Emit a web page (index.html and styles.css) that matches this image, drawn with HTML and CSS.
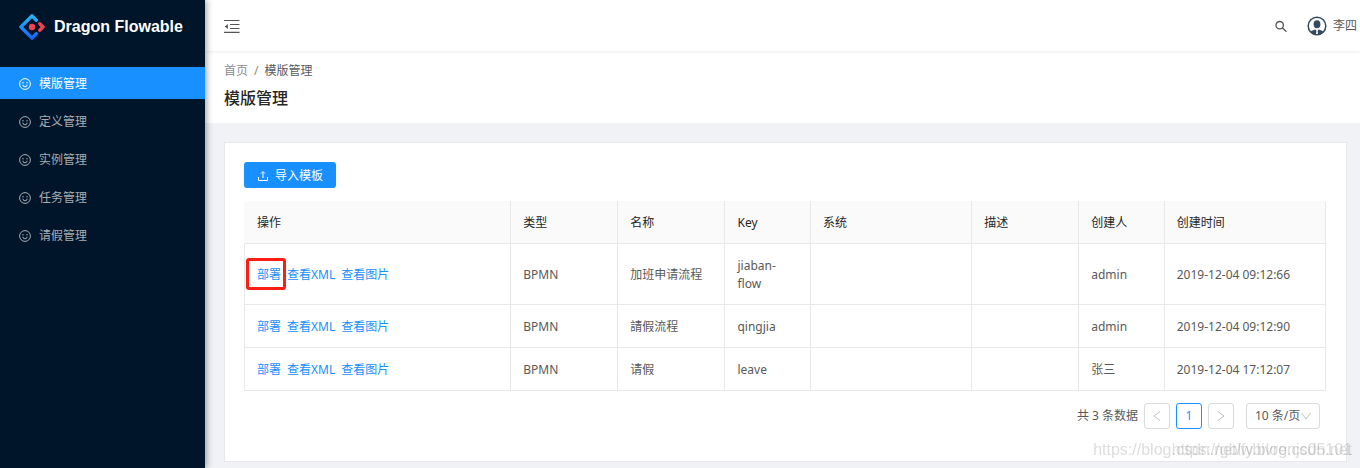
FILE: index.html
```html
<!DOCTYPE html>
<html lang="zh-CN">
<head>
    <meta charset="utf-8">
    <title>Dragon Flowable</title>
    <meta name="viewport" content="width=device-width, initial-scale=1">
    <link rel="stylesheet" href="styles.css">
</head>
<body>
    <svg class="sprite" aria-hidden="true">
        <symbol id="smile" viewBox="0 0 12 12">
            <circle cx="6" cy="6" r="5.4" fill="none" stroke="currentColor"/>
            <circle cx="4" cy="4.8" r=".7" fill="currentColor"/>
            <circle cx="8" cy="4.8" r=".7" fill="currentColor"/>
            <path d="M3.9 6.7a2.1 2.1 0 0 0 4.2 0" fill="none" stroke="currentColor"/>
        </symbol>
    </svg>
    <aside class="sider">
        <a class="logo" href="#">
            <svg width="26" height="26" viewBox="0 0 26 26" fill="none" stroke-width="3.4" stroke-linecap="round" stroke-linejoin="round">
                <defs>
                    <linearGradient id="blue" x1="0" y1="0" x2="0" y2="1">
                        <stop offset="0" stop-color="#29b4ee"/>
                        <stop offset="1" stop-color="#1268ff"/>
                    </linearGradient>
                </defs>
                <path d="M17.3 6.2 13 1.900 1.900 13 13 24.100l4.3-4.3" stroke="url(#blue)"/>
                <path d="M20.800 9.800 24 13l-3.200 3.200" stroke="#f5404f"/>
                <circle cx="13" cy="13" r="3.2" fill="#f5404f"/>
            </svg>
            <h1>Dragon Flowable</h1>
        </a>
        <nav class="menu">
            <a class="menu-item active" href="#"><svg><use href="#smile"/></svg>模版管理</a>
            <a class="menu-item" href="#"><svg><use href="#smile"/></svg>定义管理</a>
            <a class="menu-item" href="#"><svg><use href="#smile"/></svg>实例管理</a>
            <a class="menu-item" href="#"><svg><use href="#smile"/></svg>任务管理</a>
            <a class="menu-item" href="#"><svg><use href="#smile"/></svg>请假管理</a>
        </nav>
    </aside>
    <div class="main">
        <header class="header">
            <button class="icon-btn" type="button" aria-label="折叠菜单">
                <svg width="16" height="14" viewBox="0 0 16 14" fill="none" stroke="#555" stroke-width="1.2">
                    <path d="M0 1.5h15.5M6 5.5h9.5M6 9.500h9.5M0 13.400h15.5"/>
                    <path d="M3.800 4.900v5L.8 7.400z" fill="#555" stroke="none"/>
                </svg>
            </button>
            <div class="header-right">
                <button class="icon-btn" type="button" aria-label="搜索">
                    <svg width="12" height="12" viewBox="0 0 12 12" fill="none" stroke="#555" stroke-width="1.3">
                        <circle cx="4.7" cy="5.2" r="3.7"/>
                        <path d="M7.4 8 11.5 11.7"/>
                    </svg>
                </button>
                <a class="user" href="#">
                    <svg width="20" height="20" viewBox="0 0 20 20">
                        <circle cx="10" cy="10" r="8.8" fill="none" stroke="#34495e" stroke-width="1.5"/>
                        <ellipse cx="10" cy="8.200" rx="3.4" ry="4" fill="#34495e"/>
                        <path d="M3.8 15.6c1.5-1.8 3.300-1.600 4.600-2.200l1 1.500-.6 4c-2-.3-3.700-1.500-5-3.300zM16.200 15.600c-1.500-1.800-3.300-1.600-4.600-2.200l-1 1.500.6 4c2-.3 3.700-1.500 5-3.300z" fill="#34495e"/>
                    </svg>
                    李四
                </a>
            </div>
        </header>
        <div class="page-header">
            <nav class="breadcrumb"><a href="#">首页</a><i>/</i><span>模版管理</span></nav>
            <h2>模版管理</h2>
        </div>
        <main class="card">
            <button class="btn-primary" type="button">
                <svg width="12" height="12" viewBox="0 0 12 12" fill="none" stroke="currentColor">
                    <path d="M1.5 7v3.500h9V7M6 8V2M4 3.500 6 1.500l2 2"/>
                </svg>
                导入模板
            </button>
            <table class="table">
                <colgroup>
                    <col class="col-action"><col class="col-m"><col class="col-m"><col class="col-s">
                    <col class="col-l"><col class="col-m"><col class="col-s"><col>
                </colgroup>
                <thead>
                    <tr>
                        <th>操作</th><th>类型</th><th>名称</th><th>Key</th>
                        <th>系统</th><th>描述</th><th>创建人</th><th>创建时间</th>
                    </tr>
                </thead>
                <tbody>
                    <tr>
                        <td><div class="actions"><a class="marked" href="#">部署</a><a href="#">查看XML</a><a href="#">查看图片</a></div></td>
                        <td>BPMN</td><td>加班申请流程</td><td>jiaban-flow</td>
                        <td></td><td></td><td>admin</td><td>2019-12-04 09:12:66</td>
                    </tr>
                    <tr>
                        <td><div class="actions"><a href="#">部署</a><a href="#">查看XML</a><a href="#">查看图片</a></div></td>
                        <td>BPMN</td><td>請假流程</td><td>qingjia</td>
                        <td></td><td></td><td>admin</td><td>2019-12-04 09:12:90</td>
                    </tr>
                    <tr>
                        <td><div class="actions"><a href="#">部署</a><a href="#">查看XML</a><a href="#">查看图片</a></div></td>
                        <td>BPMN</td><td>请假</td><td>leave</td>
                        <td></td><td></td><td>张三</td><td>2019-12-04 17:12:07</td>
                    </tr>
                </tbody>
            </table>
            <div class="pagination">
                <span>共 3 条数据</span>
                <button class="page-btn" type="button" aria-label="上一页" disabled>
                    <svg width="10" height="12" viewBox="0 0 10 12" fill="none" stroke="currentColor"><path d="M8 1.5 2 6l6 4.5"/></svg>
                </button>
                <button class="page-btn current" type="button">1</button>
                <button class="page-btn" type="button" aria-label="下一页" disabled>
                    <svg width="10" height="12" viewBox="0 0 10 12" fill="none" stroke="currentColor"><path d="M2 1.5 8 6l-6 4.5"/></svg>
                </button>
                <div class="page-size">
                    <select aria-label="每页条数"><option>10 条/页</option></select>
                    <svg width="10" height="8" viewBox="0 0 10 8" fill="none" stroke="currentColor"><path d="M.5 1 5 7l4.5-6"/></svg>
                </div>
            </div>
        </main>
    </div>
    <div class="watermark">https://blog.csdn.net/wbivrenjc05101</div>
    <div class="watermark">https://gblfy.blog.csdn.net</div>
</body>
</html>
```
FILE: styles.css
```css
* {
    box-sizing: border-box;
}
body {
    margin: 0;
    min-height: 100vh;
    display: flex;
    background: #f0f2f5;
    color: #595959;
    font: 12px/18px "Noto Sans", "Noto Sans CJK SC", sans-serif;
}
a {
    color: #1890ff;
    text-decoration: none;
}
button,
select {
    font: inherit;
    cursor: pointer;
}
h1,
h2 {
    margin: 0;
}
.sprite {
    position: absolute;
    width: 0;
    height: 0;
}

/* sider */
.sider {
    flex: 0 0 205px;
    background: #001529;
    box-shadow: 2px 0 6px rgba(0, 21, 41, .35);
    z-index: 1;
}
.logo {
    display: flex;
    align-items: center;
    gap: 9px;
    height: 54px;
    padding-left: 19px;
}
.logo h1 {
    color: #fff;
    font: bold 16px/24px "Liberation Sans", Arial, sans-serif;
}
.menu {
    display: flex;
    flex-direction: column;
    gap: 6px;
    padding-top: 13px;
}
.menu-item {
    display: flex;
    align-items: center;
    gap: 8px;
    height: 32px;
    padding: 2px 0 0 19px;
    color: #a6adb4;
}
.menu-item svg {
    width: 12px;
    height: 12px;
}
.menu-item.active {
    background: #1890ff;
    color: #fff;
}

/* header */
.main {
    flex: 1;
    min-width: 0;
}
.header {
    display: flex;
    align-items: center;
    justify-content: space-between;
    height: 51px;
    padding: 0 3px 0 19px;
    background: #fff;
    box-shadow: 0 1px 3px rgba(0, 21, 41, .08);
    position: relative;
}
.icon-btn {
    display: flex;
    padding: 0;
    border: 0;
    background: none;
}
.header-right {
    display: flex;
    align-items: center;
    gap: 20px;
}
.user {
    display: flex;
    align-items: center;
    gap: 6px;
    color: #595959;
}
.page-header {
    padding: 11px 19px 13px;
    background: #fff;
}
.breadcrumb {
    display: flex;
    gap: 6px;
}
.breadcrumb a,
.breadcrumb i {
    color: #8c8c8c;
    font-style: normal;
}
.page-header h2 {
    margin-top: 6px;
    color: #262626;
    font-size: 16px;
    font-weight: 500;
    line-height: 24px;
}

/* content */
.card {
    margin: 19px 13px 6px 19px;
    padding: 19px 20px 32px 19px;
    background: #fff;
    border: 1px solid #e8e8e8;
}
.btn-primary {
    display: flex;
    align-items: center;
    gap: 6px;
    height: 26px;
    padding: 2px 13px 0;
    border: 0;
    border-radius: 3px;
    background: #1890ff;
    color: #fff;
}
.table {
    width: 100%;
    margin-top: 13px;
    table-layout: fixed;
    border-collapse: separate;
    border-spacing: 0;
}
.col-action { width: 24.7%; }
.col-m { width: 9.9%; }
.col-s { width: 7.9%; }
.col-l { width: 14.9%; }
.table th,
.table td {
    padding: 13px 12px 11px;
    border-right: 1px solid #e8e8e8;
    border-bottom: 1px solid #e8e8e8;
    text-align: left;
}
.table th {
    background: #fafafa;
    color: #262626;
    font-weight: 400;
}
.table th:first-child {
    padding-left: 13px;
    border-top-left-radius: 3px;
}
.table th:last-child {
    border-top-right-radius: 3px;
}
.table td:first-child {
    border-left: 1px solid #e8e8e8;
}
.actions {
    display: flex;
    gap: 6px;
}
.marked {
    position: relative;
}
.marked::after {
    content: "";
    position: absolute;
    inset: -8px -5px -6px -11px;
    border: 3px solid #fc1e13;
    border-radius: 3px;
}
.pagination {
    display: flex;
    align-items: center;
    justify-content: flex-end;
    gap: 6px;
    padding: 12px 6px 0 0;
}
.page-btn {
    display: flex;
    align-items: center;
    justify-content: center;
    width: 26px;
    height: 26px;
    padding: 0;
    border: 1px solid #d9d9d9;
    border-radius: 3px;
    background: #fff;
    color: #bfbfbf;
}
.page-btn.current {
    border-color: #1890ff;
    color: #1890ff;
}
.page-size {
    position: relative;
    margin-left: 6px;
    color: #bfbfbf;
}
.page-size select {
    display: block;
    appearance: none;
    width: 74px;
    height: 26px;
    padding: 0 8px;
    border: 1px solid #d9d9d9;
    border-radius: 3px;
    background: #fff;
    color: #595959;
}
.page-size svg {
    position: absolute;
    right: 9px;
    top: 9px;
    pointer-events: none;
}

.watermark {
    position: fixed;
    right: 8px;
    bottom: 8px;
    z-index: 2;
    color: rgba(120, 120, 120, .25);
    font: 16px/20px "Liberation Sans", Arial, sans-serif;
}
```
